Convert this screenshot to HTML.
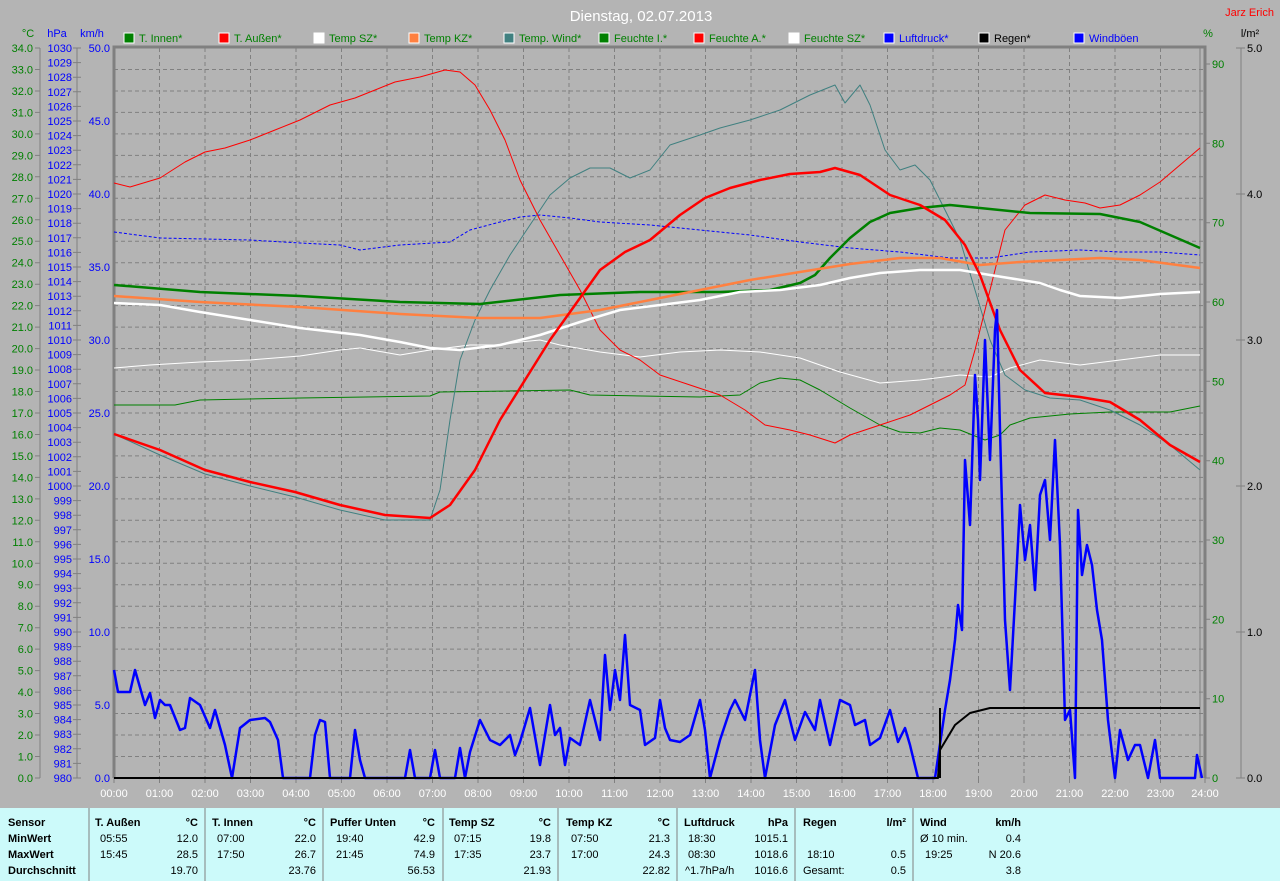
<!DOCTYPE html>
<html><head><meta charset="utf-8"><style>
html,body{margin:0;padding:0;background:#b4b4b4;}
svg{display:block;font-family:"Liberation Sans",sans-serif;}
</style></head><body>
<svg width="1280" height="881" viewBox="0 0 1280 881" xmlns="http://www.w3.org/2000/svg">
<rect width="1280" height="881" fill="#b4b4b4"/>
<text x="641" y="21" font-size="15" fill="#fff" text-anchor="middle">Dienstag, 02.07.2013</text>
<text x="1274" y="16" font-size="11" fill="#f00" text-anchor="end">Jarz Erich</text>
<g font-size="11">
<text x="28" y="37" fill="#008000" text-anchor="middle">°C</text>
<text x="57" y="37" fill="#00f" text-anchor="middle">hPa</text>
<text x="92" y="37" fill="#00f" text-anchor="middle">km/h</text>
<text x="1208" y="37" fill="#008000" text-anchor="middle">%</text>
<text x="1250" y="37" fill="#000" text-anchor="middle">l/m²</text>
</g>
<!-- legend -->
<g font-size="11">
<rect x="124" y="33" width="10" height="10" fill="#008000" stroke="#fff"/><text x="139" y="42" fill="#008000">T. Innen*</text>
<rect x="219" y="33" width="10" height="10" fill="#f00" stroke="#fff"/><text x="234" y="42" fill="#008000">T. Außen*</text>
<rect x="314" y="33" width="10" height="10" fill="#fff" stroke="#fff"/><text x="329" y="42" fill="#008000">Temp SZ*</text>
<rect x="409" y="33" width="10" height="10" fill="#ff8040" stroke="#fff"/><text x="424" y="42" fill="#008000">Temp KZ*</text>
<rect x="504" y="33" width="10" height="10" fill="#408080" stroke="#fff"/><text x="519" y="42" fill="#008000">Temp. Wind*</text>
<rect x="599" y="33" width="10" height="10" fill="#008000" stroke="#fff"/><text x="614" y="42" fill="#008000">Feuchte I.*</text>
<rect x="694" y="33" width="10" height="10" fill="#f00" stroke="#fff"/><text x="709" y="42" fill="#008000">Feuchte A.*</text>
<rect x="789" y="33" width="10" height="10" fill="#fff" stroke="#fff"/><text x="804" y="42" fill="#008000">Feuchte SZ*</text>
<rect x="884" y="33" width="10" height="10" fill="#00f" stroke="#fff"/><text x="899" y="42" fill="#00f">Luftdruck*</text>
<rect x="979" y="33" width="10" height="10" fill="#000" stroke="#fff"/><text x="994" y="42" fill="#000">Regen*</text>
<rect x="1074" y="33" width="10" height="10" fill="#00f" stroke="#fff"/><text x="1089" y="42" fill="#00f">Windböen</text>
</g>
<!-- grid -->
<g stroke="#808080" stroke-dasharray="4,3" stroke-width="1">
<path d="M159.5 48V778M205 48V778M250.5 48V778M296 48V778M341.5 48V778M387 48V778M432.5 48V778M478 48V778M523.5 48V778M569 48V778M614.5 48V778M660 48V778M705.5 48V778M751 48V778M796.5 48V778M842 48V778M887.5 48V778M933 48V778M978.5 48V778M1024 48V778M1069.5 48V778M1115 48V778M1160.5 48V778"/>
<path d="M114 69.5H1205M114 91H1205M114 112.4H1205M114 133.9H1205M114 155.4H1205M114 176.8H1205M114 198.3H1205M114 219.8H1205M114 241.2H1205M114 262.7H1205M114 284.2H1205M114 305.6H1205M114 327.1H1205M114 348.6H1205M114 370H1205M114 391.5H1205M114 413H1205M114 434.5H1205M114 455.9H1205M114 477.4H1205M114 498.9H1205M114 520.3H1205M114 541.8H1205M114 563.3H1205M114 584.7H1205M114 606.2H1205M114 627.7H1205M114 649.1H1205M114 670.6H1205M114 692.1H1205M114 713.5H1205M114 735H1205M114 756.5H1205"/>
</g>
<!-- frame -->
<path d="M114 778V47H1205V778" fill="none" stroke="#808080" stroke-width="3"/>
<path d="M1200 48V778" stroke="#808080" stroke-width="1"/>
<!-- axis lines -->
<g stroke="#808080" stroke-width="1" fill="none">
<path d="M40 48V778M77 48V778M1241 48V778"/>
<path d="M35 48H40M35 69.5H40M35 91H40M35 112.4H40M35 133.9H40M35 155.4H40M35 176.8H40M35 198.3H40M35 219.8H40M35 241.2H40M35 262.7H40M35 284.2H40M35 305.6H40M35 327.1H40M35 348.6H40M35 370H40M35 391.5H40M35 413H40M35 434.5H40M35 455.9H40M35 477.4H40M35 498.9H40M35 520.3H40M35 541.8H40M35 563.3H40M35 584.7H40M35 606.2H40M35 627.7H40M35 649.1H40M35 670.6H40M35 692.1H40M35 713.5H40M35 735H40M35 756.5H40M35 778H40"/>
<path d="M73 48H81M73 62.6H81M73 77.2H81M73 91.8H81M73 106.4H81M73 121H81M73 135.6H81M73 150.2H81M73 164.8H81M73 179.4H81M73 194H81M73 208.6H81M73 223.2H81M73 237.8H81M73 252.4H81M73 267H81M73 281.6H81M73 296.2H81M73 310.8H81M73 325.4H81M73 340H81M73 354.6H81M73 369.2H81M73 383.8H81M73 398.4H81M73 413H81M73 427.6H81M73 442.2H81M73 456.8H81M73 471.4H81M73 486H81M73 500.6H81M73 515.2H81M73 529.8H81M73 544.4H81M73 559H81M73 573.6H81M73 588.2H81M73 602.8H81M73 617.4H81M73 632H81M73 646.6H81M73 661.2H81M73 675.8H81M73 690.4H81M73 705H81M73 719.6H81M73 734.2H81M73 748.8H81M73 763.4H81M73 778H81"/>
<path d="M1205 64H1210M1205 143.3H1210M1205 222.7H1210M1205 302H1210M1205 381.3H1210M1205 460.7H1210M1205 540H1210M1205 619.3H1210M1205 698.7H1210M1205 778H1210"/>
<path d="M1236 48H1245M1236 194H1245M1236 340H1245M1236 486H1245M1236 632H1245M1236 778H1245"/>
<path d="M114 778V783M159.5 778V783M205 778V783M250.5 778V783M296 778V783M341.5 778V783M387 778V783M432.5 778V783M478 778V783M523.5 778V783M569 778V783M614.5 778V783M660 778V783M705.5 778V783M751 778V783M796.5 778V783M842 778V783M887.5 778V783M933 778V783M978.5 778V783M1024 778V783M1069.5 778V783M1115 778V783M1160.5 778V783M1205 778V783"/>
</g>
<!-- axis labels -->
<g font-size="11" fill="#008000" text-anchor="end">
<text x="33" y="52"><tspan x="33" y="52">34.0</tspan><tspan x="33" y="73.5">33.0</tspan><tspan x="33" y="95">32.0</tspan><tspan x="33" y="116.4">31.0</tspan><tspan x="33" y="137.9">30.0</tspan><tspan x="33" y="159.4">29.0</tspan><tspan x="33" y="180.8">28.0</tspan><tspan x="33" y="202.3">27.0</tspan><tspan x="33" y="223.8">26.0</tspan><tspan x="33" y="245.2">25.0</tspan><tspan x="33" y="266.7">24.0</tspan><tspan x="33" y="288.2">23.0</tspan><tspan x="33" y="309.6">22.0</tspan><tspan x="33" y="331.1">21.0</tspan><tspan x="33" y="352.6">20.0</tspan><tspan x="33" y="374">19.0</tspan><tspan x="33" y="395.5">18.0</tspan><tspan x="33" y="417">17.0</tspan><tspan x="33" y="438.5">16.0</tspan><tspan x="33" y="459.9">15.0</tspan><tspan x="33" y="481.4">14.0</tspan><tspan x="33" y="502.9">13.0</tspan><tspan x="33" y="524.3">12.0</tspan><tspan x="33" y="545.8">11.0</tspan><tspan x="33" y="567.3">10.0</tspan><tspan x="33" y="588.7">9.0</tspan><tspan x="33" y="610.2">8.0</tspan><tspan x="33" y="631.7">7.0</tspan><tspan x="33" y="653.1">6.0</tspan><tspan x="33" y="674.6">5.0</tspan><tspan x="33" y="696.1">4.0</tspan><tspan x="33" y="717.5">3.0</tspan><tspan x="33" y="739">2.0</tspan><tspan x="33" y="760.5">1.0</tspan><tspan x="33" y="782">0.0</tspan></text>
</g>
<g font-size="11" fill="#00f" text-anchor="end">
<text><tspan x="72" y="52">1030</tspan><tspan x="72" y="66.6">1029</tspan><tspan x="72" y="81.2">1028</tspan><tspan x="72" y="95.8">1027</tspan><tspan x="72" y="110.4">1026</tspan><tspan x="72" y="125">1025</tspan><tspan x="72" y="139.6">1024</tspan><tspan x="72" y="154.2">1023</tspan><tspan x="72" y="168.8">1022</tspan><tspan x="72" y="183.4">1021</tspan><tspan x="72" y="198">1020</tspan><tspan x="72" y="212.6">1019</tspan><tspan x="72" y="227.2">1018</tspan><tspan x="72" y="241.8">1017</tspan><tspan x="72" y="256.4">1016</tspan><tspan x="72" y="271">1015</tspan><tspan x="72" y="285.6">1014</tspan><tspan x="72" y="300.2">1013</tspan><tspan x="72" y="314.8">1012</tspan><tspan x="72" y="329.4">1011</tspan><tspan x="72" y="344">1010</tspan><tspan x="72" y="358.6">1009</tspan><tspan x="72" y="373.2">1008</tspan><tspan x="72" y="387.8">1007</tspan><tspan x="72" y="402.4">1006</tspan><tspan x="72" y="417">1005</tspan><tspan x="72" y="431.6">1004</tspan><tspan x="72" y="446.2">1003</tspan><tspan x="72" y="460.8">1002</tspan><tspan x="72" y="475.4">1001</tspan><tspan x="72" y="490">1000</tspan><tspan x="72" y="504.6">999</tspan><tspan x="72" y="519.2">998</tspan><tspan x="72" y="533.8">997</tspan><tspan x="72" y="548.4">996</tspan><tspan x="72" y="563">995</tspan><tspan x="72" y="577.6">994</tspan><tspan x="72" y="592.2">993</tspan><tspan x="72" y="606.8">992</tspan><tspan x="72" y="621.4">991</tspan><tspan x="72" y="636">990</tspan><tspan x="72" y="650.6">989</tspan><tspan x="72" y="665.2">988</tspan><tspan x="72" y="679.8">987</tspan><tspan x="72" y="694.4">986</tspan><tspan x="72" y="709">985</tspan><tspan x="72" y="723.6">984</tspan><tspan x="72" y="738.2">983</tspan><tspan x="72" y="752.8">982</tspan><tspan x="72" y="767.4">981</tspan><tspan x="72" y="782">980</tspan></text>
<text><tspan x="110" y="52">50.0</tspan><tspan x="110" y="125">45.0</tspan><tspan x="110" y="198">40.0</tspan><tspan x="110" y="271">35.0</tspan><tspan x="110" y="344">30.0</tspan><tspan x="110" y="417">25.0</tspan><tspan x="110" y="490">20.0</tspan><tspan x="110" y="563">15.0</tspan><tspan x="110" y="636">10.0</tspan><tspan x="110" y="709">5.0</tspan><tspan x="110" y="782">0.0</tspan></text>
</g>
<g font-size="11" fill="#008000">
<text><tspan x="1212" y="68">90</tspan><tspan x="1212" y="147.3">80</tspan><tspan x="1212" y="226.7">70</tspan><tspan x="1212" y="306">60</tspan><tspan x="1212" y="385.3">50</tspan><tspan x="1212" y="464.7">40</tspan><tspan x="1212" y="544">30</tspan><tspan x="1212" y="623.3">20</tspan><tspan x="1212" y="702.7">10</tspan><tspan x="1212" y="782">0</tspan></text>
</g>
<g font-size="11" fill="#000">
<text><tspan x="1247" y="52">5.0</tspan><tspan x="1247" y="198">4.0</tspan><tspan x="1247" y="344">3.0</tspan><tspan x="1247" y="490">2.0</tspan><tspan x="1247" y="636">1.0</tspan><tspan x="1247" y="782">0.0</tspan></text>
</g>
<g font-size="11" fill="#fff" text-anchor="middle">
<text><tspan x="114" y="797">00:00</tspan><tspan x="159.5" y="797">01:00</tspan><tspan x="205" y="797">02:00</tspan><tspan x="250.5" y="797">03:00</tspan><tspan x="296" y="797">04:00</tspan><tspan x="341.5" y="797">05:00</tspan><tspan x="387" y="797">06:00</tspan><tspan x="432.5" y="797">07:00</tspan><tspan x="478" y="797">08:00</tspan><tspan x="523.5" y="797">09:00</tspan><tspan x="569" y="797">10:00</tspan><tspan x="614.5" y="797">11:00</tspan><tspan x="660" y="797">12:00</tspan><tspan x="705.5" y="797">13:00</tspan><tspan x="751" y="797">14:00</tspan><tspan x="796.5" y="797">15:00</tspan><tspan x="842" y="797">16:00</tspan><tspan x="887.5" y="797">17:00</tspan><tspan x="933" y="797">18:00</tspan><tspan x="978.5" y="797">19:00</tspan><tspan x="1024" y="797">20:00</tspan><tspan x="1069.5" y="797">21:00</tspan><tspan x="1115" y="797">22:00</tspan><tspan x="1160.5" y="797">23:00</tspan><tspan x="1205" y="797">24:00</tspan></text>
</g>
<!-- curves -->
<g fill="none" stroke-linejoin="round">
<polyline stroke="#0000ff" stroke-width="1" stroke-dasharray="3,2" points="114,232 160,238 250,240 300,243 340,245 360,250 400,245 450,242 470,230 500,222 520,217 540,215 570,218 600,222 650,225 700,230 750,235 800,242 850,248 900,252 950,258 990,258 1030,252 1080,250 1120,252 1160,252 1200,255"/>
<polyline stroke="#fff" stroke-width="1" points="114,368 150,365 200,362 250,360 300,356 340,350 360,348 400,355 430,350 470,345 500,345 520,342 540,340 560,345 600,352 640,357 680,352 720,350 760,352 800,358 840,372 880,383 920,380 960,375 990,377 1010,368 1040,360 1080,365 1120,360 1160,355 1200,355"/>
<polyline stroke="#008000" stroke-width="1" points="114,405 175,405 200,400 300,398 430,396 440,392 570,390 590,395 700,397 740,395 760,383 780,378 800,380 820,390 850,408 880,425 900,432 920,433 940,428 960,430 985,440 1000,435 1010,425 1030,418 1070,414 1110,412 1170,412 1200,406"/>
<polyline stroke="#408080" stroke-width="1" points="114,434 160,455 205,474 250,486 295,497 340,510 385,520 430,520 440,490 450,420 460,360 475,320 490,290 510,255 530,225 550,195 570,178 590,168 610,168 630,178 650,170 670,145 700,135 720,128 750,120 780,110 810,95 835,85 845,103 860,85 870,105 885,150 900,170 915,165 930,180 945,210 960,240 975,290 990,340 1005,375 1025,390 1050,398 1080,400 1110,410 1140,425 1170,445 1200,470"/>
<polyline stroke="#ff0000" stroke-width="1" points="114,183 130,187 160,178 185,162 205,152 225,148 250,140 275,130 300,120 330,105 355,98 375,90 395,82 420,77 445,70 460,72 475,85 490,110 505,140 520,180 540,220 560,255 580,290 600,330 620,350 640,360 660,375 690,385 720,395 745,410 765,425 790,430 810,435 835,443 850,435 880,425 910,415 930,405 950,395 965,385 975,350 990,290 1005,230 1025,205 1045,195 1065,200 1085,203 1100,208 1120,205 1140,195 1160,182 1180,165 1200,148"/>
<polyline stroke="#008000" stroke-width="2.5" points="114,285 200,292 300,296 400,302 480,304 560,295 640,292 720,292 770,290 800,283 815,275 830,258 850,238 870,222 890,213 920,208 950,205 980,208 1030,213 1100,214 1140,222 1170,235 1200,248"/>
<polyline stroke="#ff8040" stroke-width="2.5" points="114,296 200,302 300,307 400,314 480,318 540,318 600,310 650,300 700,290 750,280 800,272 850,264 900,258 940,258 980,265 1020,262 1060,260 1100,258 1140,260 1170,264 1200,268"/>
<polyline stroke="#fff" stroke-width="2.5" points="114,303 160,305 200,312 250,320 300,328 360,335 400,342 430,348 460,350 500,345 540,335 580,322 620,310 660,305 700,300 740,292 780,290 820,285 850,278 880,273 920,270 960,270 990,275 1040,283 1060,290 1080,296 1120,298 1160,294 1200,292"/>
<polyline stroke="#ff0000" stroke-width="2.5" points="114,434 160,450 205,470 250,482 295,492 340,505 385,515 430,518 450,505 475,470 500,420 525,380 550,340 575,305 600,270 625,252 650,240 680,215 705,198 730,188 760,180 790,174 820,172 835,168 860,175 890,195 920,205 945,220 965,245 980,275 1000,330 1020,370 1045,393 1080,397 1110,402 1140,420 1170,445 1200,462"/>
<polyline stroke="#0000ff" stroke-width="2.5" points="114,670 118,692 130,692 135,670 145,705 150,693 155,718 160,700 165,705 170,705 180,730 185,728 190,698 200,705 210,728 215,710 225,745 232,778 240,728 250,720 265,718 270,722 278,740 283,778 310,778 315,735 320,720 325,722 330,778 350,778 355,730 360,760 365,778 405,778 410,750 415,778 430,778 435,750 440,778 455,778 460,748 465,778 470,752 480,720 490,740 500,745 510,735 515,755 520,742 530,708 540,765 550,705 555,735 560,728 565,765 570,738 580,745 590,700 600,740 605,655 610,710 615,670 620,700 625,635 630,705 640,710 645,745 655,738 660,700 665,728 670,740 680,742 690,735 700,700 705,730 710,778 720,740 730,710 735,700 745,720 755,670 760,740 765,778 775,725 785,700 795,740 805,712 815,730 820,700 830,745 840,700 850,705 855,725 865,720 870,745 880,738 890,710 898,742 905,728 910,745 918,778 935,778 945,710 950,680 955,640 958,605 962,630 965,460 970,525 975,375 978,420 980,480 985,340 990,460 995,330 997,310 1000,430 1005,620 1010,690 1015,600 1020,505 1025,560 1030,525 1035,590 1040,495 1045,480 1050,540 1055,440 1060,545 1065,720 1070,710 1075,778 1078,510 1082,575 1087,545 1092,565 1097,610 1102,640 1108,720 1115,778 1120,730 1128,760 1135,745 1140,745 1148,778 1155,740 1160,778 1195,778 1197,755 1202,778"/>
<polyline stroke="#000" stroke-width="2" points="114,778 938,778 940,750 955,725 970,713 990,708 1200,708"/>
<path d="M940 778V708" stroke="#000" stroke-width="2"/>
</g>
<!-- table -->
<rect x="0" y="808" width="1280" height="73" fill="#ccfafa"/>
<g stroke="#808080" stroke-width="1">
<path d="M89 808V881M205 808V881M323 808V881M443 808V881M558 808V881M677 808V881M795 808V881M913 808V881"/>
</g>
<g font-size="11" fill="#000">
<g font-weight="bold">
<text x="8" y="826">Sensor</text><text x="8" y="842">MinWert</text><text x="8" y="858">MaxWert</text><text x="8" y="874">Durchschnitt</text>
<text x="95" y="826">T. Außen</text><text x="198" y="826" text-anchor="end">°C</text>
<text x="212" y="826">T. Innen</text><text x="316" y="826" text-anchor="end">°C</text>
<text x="330" y="826">Puffer Unten</text><text x="435" y="826" text-anchor="end">°C</text>
<text x="449" y="826">Temp SZ</text><text x="551" y="826" text-anchor="end">°C</text>
<text x="566" y="826">Temp KZ</text><text x="670" y="826" text-anchor="end">°C</text>
<text x="684" y="826">Luftdruck</text><text x="788" y="826" text-anchor="end">hPa</text>
<text x="803" y="826">Regen</text><text x="906" y="826" text-anchor="end">l/m²</text>
<text x="920" y="826">Wind</text><text x="1021" y="826" text-anchor="end">km/h</text>
</g>
<text x="100" y="842">05:55</text><text x="198" y="842" text-anchor="end">12.0</text>
<text x="100" y="858">15:45</text><text x="198" y="858" text-anchor="end">28.5</text>
<text x="198" y="874" text-anchor="end">19.70</text>
<text x="217" y="842">07:00</text><text x="316" y="842" text-anchor="end">22.0</text>
<text x="217" y="858">17:50</text><text x="316" y="858" text-anchor="end">26.7</text>
<text x="316" y="874" text-anchor="end">23.76</text>
<text x="336" y="842">19:40</text><text x="435" y="842" text-anchor="end">42.9</text>
<text x="336" y="858">21:45</text><text x="435" y="858" text-anchor="end">74.9</text>
<text x="435" y="874" text-anchor="end">56.53</text>
<text x="454" y="842">07:15</text><text x="551" y="842" text-anchor="end">19.8</text>
<text x="454" y="858">17:35</text><text x="551" y="858" text-anchor="end">23.7</text>
<text x="551" y="874" text-anchor="end">21.93</text>
<text x="571" y="842">07:50</text><text x="670" y="842" text-anchor="end">21.3</text>
<text x="571" y="858">17:00</text><text x="670" y="858" text-anchor="end">24.3</text>
<text x="670" y="874" text-anchor="end">22.82</text>
<text x="688" y="842">18:30</text><text x="788" y="842" text-anchor="end">1015.1</text>
<text x="688" y="858">08:30</text><text x="788" y="858" text-anchor="end">1018.6</text>
<text x="685" y="874">^1.7hPa/h</text><text x="788" y="874" text-anchor="end">1016.6</text>
<text x="807" y="858">18:10</text><text x="906" y="858" text-anchor="end">0.5</text>
<text x="803" y="874">Gesamt:</text><text x="906" y="874" text-anchor="end">0.5</text>
<text x="920" y="842">Ø 10 min.</text><text x="1021" y="842" text-anchor="end">0.4</text>
<text x="925" y="858">19:25</text><text x="1021" y="858" text-anchor="end">N 20.6</text>
<text x="1021" y="874" text-anchor="end">3.8</text>
</g>
</svg>
</body></html>
